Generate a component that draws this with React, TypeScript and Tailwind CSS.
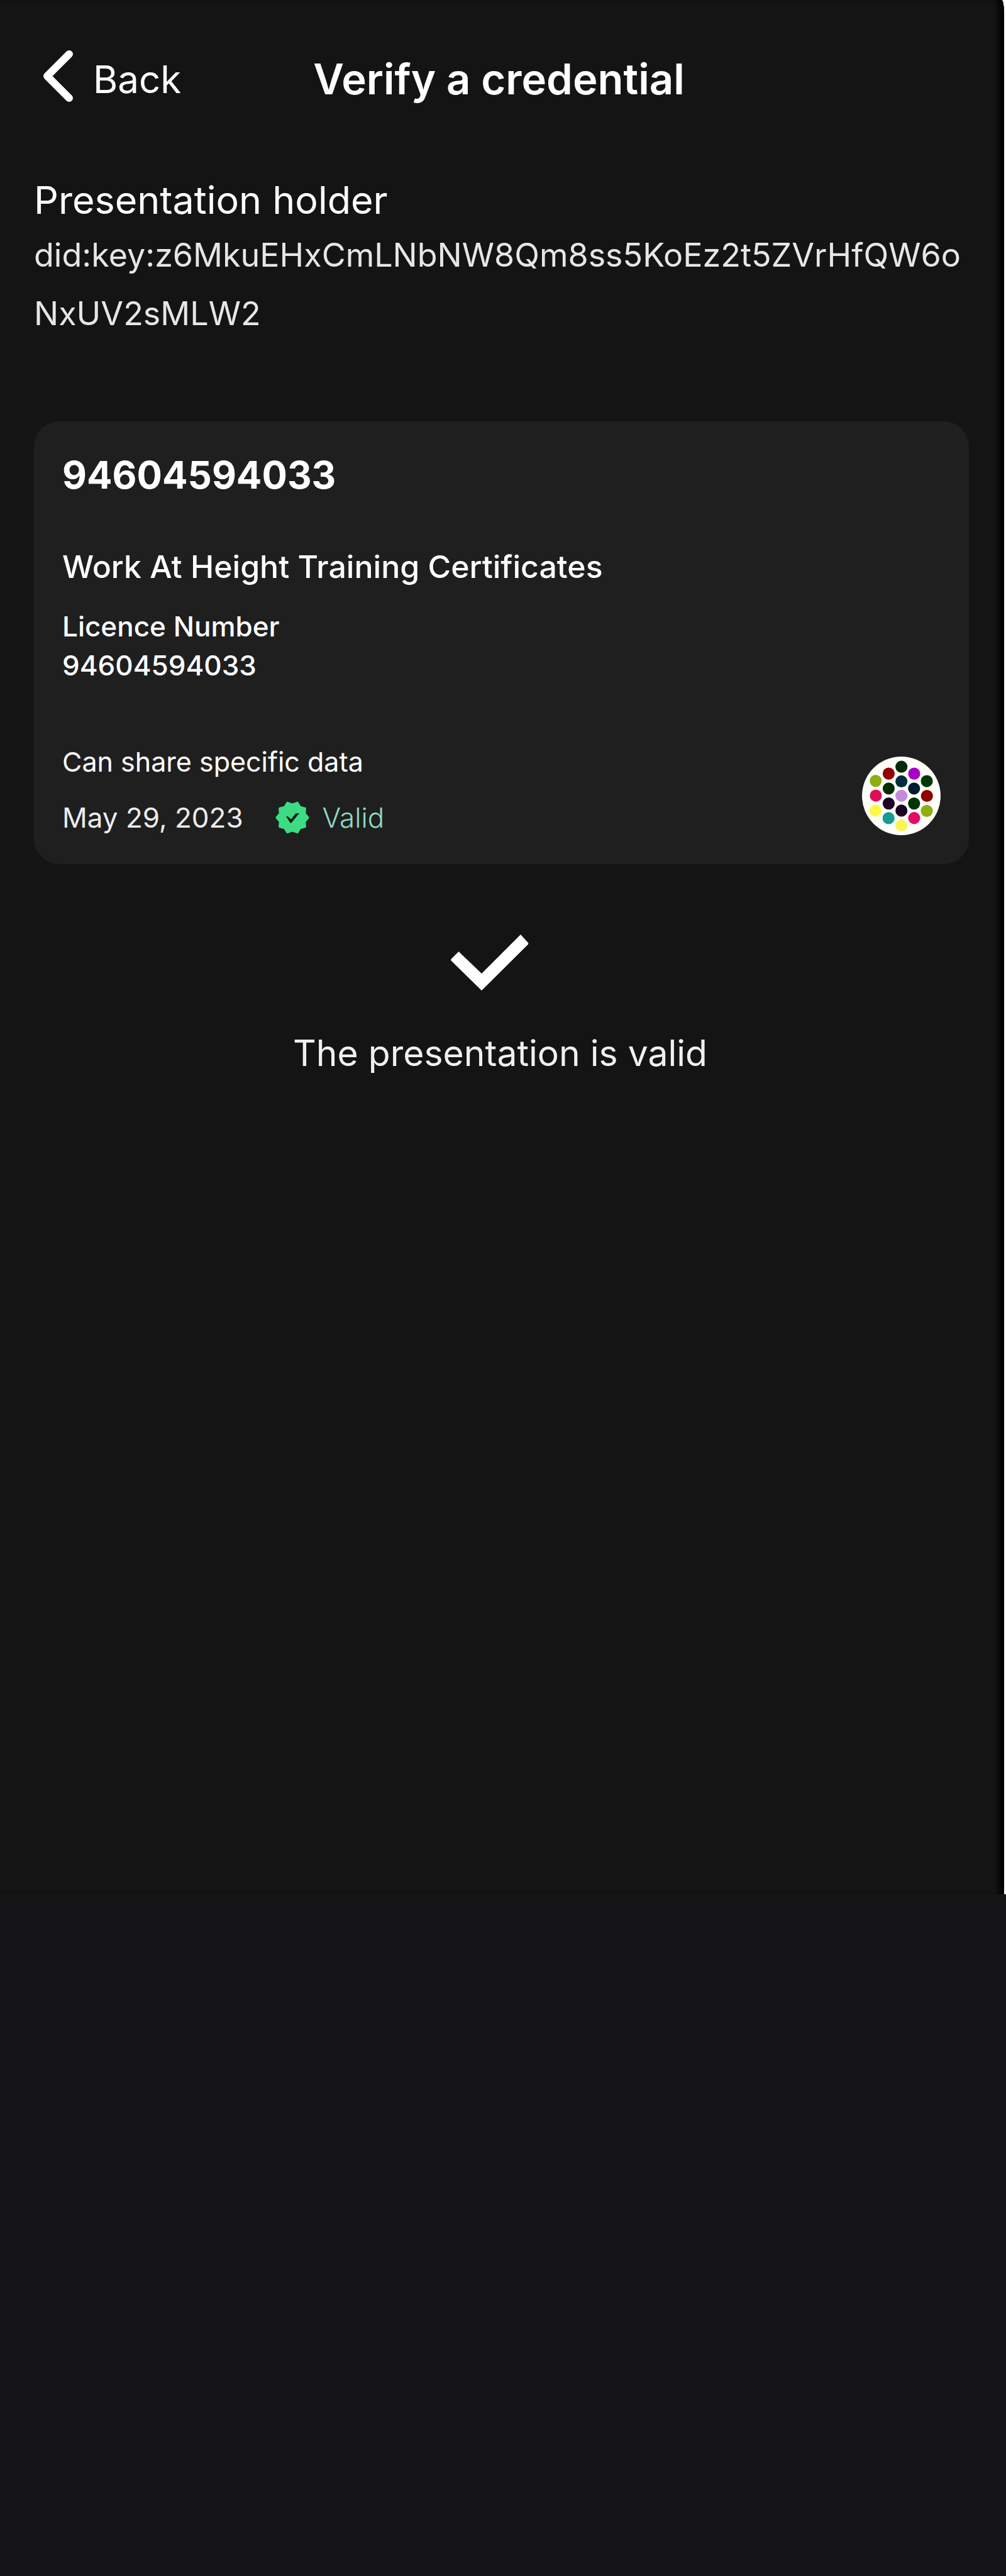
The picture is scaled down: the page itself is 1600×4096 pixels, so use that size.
const DOTS: [number, number, string][] = [
  [412, 194, '#062a08'],
  [317, 245, '#930000'],
  [507, 245, '#a800c8'],
  [220, 299, '#8fae12'],
  [412, 303, '#052c3c'],
  [601, 301, '#003a06'],
  [317, 356, '#032c06'],
  [506, 356, '#021c30'],
  [221, 409, '#dc0f58'],
  [412, 410, '#c58ade'],
  [602, 411, '#930000'],
  [317, 468, '#1e0322'],
  [506, 468, '#033406'],
  [218, 521, '#fffb45'],
  [412, 521, '#190322'],
  [601, 523, '#8fae12'],
  [316, 577, '#169c90'],
  [507, 576, '#e60a62'],
  [412, 631, '#fbf455'],
]

function ChevronLeft() {
  return (
    <svg className="mb-2.5 h-[84px] w-12" viewBox="0 0 48 84" fill="none" aria-hidden="true">
      <path d="M42 7 7 42l35 35" stroke="#fff" strokeWidth="12" strokeLinecap="round" strokeLinejoin="round" />
    </svg>
  )
}

function VerifiedBadge() {
  return (
    <svg className="size-14" viewBox="0 0 24 24" aria-hidden="true">
      <path
        d="m22.6 12-2.3-2.7.3-3.5-3.4-.8-1.8-3L12 3.2 8.6 2 6.800 5l-3.400.8.3 3.500L1.400 12l2.300 2.700-.3 3.500 3.400.8 1.800 3L12 20.800l3.400 1.200 1.800-3 3.400-.8-.3-3.500z"
        fill="#3ddc84"
        stroke="#3ddc84"
        strokeWidth="1.6"
        strokeLinejoin="round"
      />
      <path d="M7.600 11 8.900 11.100 11.100 13.200 14.200 9.200 16.800 9 11.300 15.600H10.600z" fill="#0f2015" />
    </svg>
  )
}

function IssuerAvatar() {
  return (
    <svg className="mb-[3px] size-[125px] shrink-0" viewBox="118 118 586 586" role="img" aria-label="Issuer">
      <circle cx="411" cy="411" r="293" fill="#fffffa" />
      {DOTS.map(([x, y, fill]) => (
        <circle key={`${x}-${y}`} cx={x} cy={y} r="45" fill={fill} />
      ))}
    </svg>
  )
}

function CheckMark() {
  return (
    <svg className="h-[90px] w-[158px]" viewBox="0 0 158 90" aria-hidden="true">
      <path d="M12.500 27 1 38.500a2.500 2.500 0 0 0 0 3.500L49 89l73.500-73a2.500 2.500 0 0 0 0-3.500L111 0 49 62z" fill="#fff" />
    </svg>
  )
}

export default function App() {
  return (
    <div className="min-h-screen bg-[#141416] font-['Inter',sans-serif] text-white">
      <div className="bg-white">
        <div className="mr-[3px] min-h-[3012px] rounded-tr-[4px_20px] bg-[#141414] pr-[56px] pl-[54px] shadow-[inset_-12px_0_8px_-4px_#000]">
          <header className="grid h-[252px] grid-cols-[1fr_auto_1fr] items-center pr-2">
            <button type="button" className="flex items-center gap-8 justify-self-start pl-3.5 text-[60px] leading-[76px]">
              <ChevronLeft />
              Back
            </button>
            <h1 className="text-[67px] leading-[76px] font-semibold">Verify a credential</h1>
          </header>

          <main>
            <section className="mt-7">
              <h2 className="text-[61px] leading-[76px]">Presentation holder</h2>
              <p className="mt-[3px] text-[52px] leading-[93px] break-all text-[#e6e6e6]">
                did:key:z6MkuEHxCmLNbNW8Qm8ss5KoEz2t5ZVrHfQW6oNxUV2sMLW2
              </p>
            </section>

            <article className="mt-[125px] rounded-[40px] bg-[#1f1f1f] px-[45px] pt-[49px] pb-[43px]">
              <h3 className="text-[60px] leading-[72px] font-bold">94604594033</h3>
              <h4 className="mt-20 text-[50px] leading-[60px] font-medium">Work At Height Training Certificates</h4>
              <dl className="mt-[34px] text-[44px] leading-[62px] font-medium">
                <dt>Licence Number</dt>
                <dd>94604594033</dd>
              </dl>
              <div className="mt-[91px] flex items-end justify-between">
                <div className="text-[44px] leading-[62px]">
                  <p className="text-[43px]">Can share specific data</p>
                  <div className="mt-[27px] flex items-center">
                    <time dateTime="2023-05-29" className="mr-[50px] text-[#ececec]">May 29, 2023</time>
                    <VerifiedBadge />
                    <span className="ml-5 font-light text-[#8fd9c4]">Valid</span>
                  </div>
                </div>
                <IssuerAvatar />
              </div>
            </article>

            <section className="mt-28 flex flex-col items-center pr-1">
              <CheckMark />
              <p className="mt-[63px] text-[57px] leading-[72px] text-[#f0f0f0]">The presentation is valid</p>
            </section>
          </main>
        </div>
      </div>
    </div>
  )
}
